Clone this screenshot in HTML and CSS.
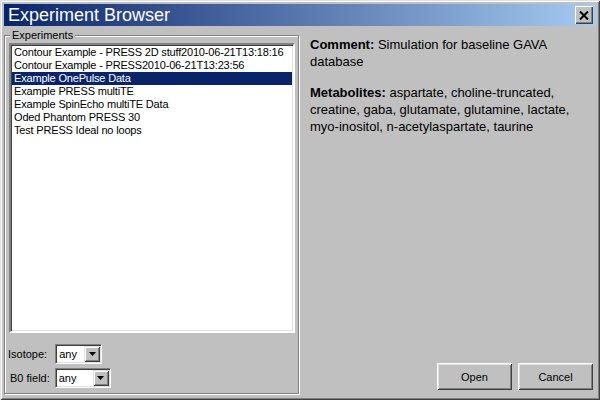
FILE: index.html
```html
<!DOCTYPE html>
<html>
<head>
<meta charset="utf-8">
<link rel="stylesheet" href="styles.css">
</head>
<body>
<div class="window">
  <div class="titlebar">
    <span class="title">Experiment Browser</span>
    <button class="close"><svg width="10" height="9" viewBox="0 0 10 9"><path d="M1 0.5 L9 8.5 M9 0.5 L1 8.5" stroke="#000" stroke-width="2" fill="none"/></svg></button>
  </div>
  <div class="content">
    <fieldset class="group">
      <legend>Experiments</legend>
      <ul class="list">
        <li>Contour Example - PRESS 2D stuff2010-06-21T13:18:16</li>
        <li>Contour Example - PRESS2010-06-21T13:23:56</li>
        <li class="selected">Example OnePulse Data</li>
        <li>Example PRESS multiTE</li>
        <li>Example SpinEcho multiTE Data</li>
        <li>Oded Phantom PRESS 30</li>
        <li>Test PRESS Ideal no loops</li>
      </ul>
      <div class="filters">
        <div class="filter filter-iso">
          <span class="label">Isotope:</span>
          <div class="combo combo-iso"><span class="value">any</span><span class="drop"><svg width="7" height="4" viewBox="0 0 7 4"><path d="M0 0 H7 L3.5 4 Z" fill="#000"/></svg></span></div>
        </div>
        <div class="filter filter-b0">
          <span class="label">B0 field:</span>
          <div class="combo combo-b0"><span class="value">any</span><span class="drop"><svg width="7" height="4" viewBox="0 0 7 4"><path d="M0 0 H7 L3.5 4 Z" fill="#000"/></svg></span></div>
        </div>
      </div>
    </fieldset>
    <div class="details">
      <div class="info">
        <p><b>Comment:</b> Simulation for baseline GAVA database</p>
        <p><b>Metabolites:</b> aspartate, choline-truncated, creatine, gaba, glutamate, glutamine, lactate, myo-inositol, n-acetylaspartate, taurine</p>
      </div>
      <div class="buttons">
        <button class="btn">Open</button>
        <button class="btn">Cancel</button>
      </div>
    </div>
  </div>
</div>
</body>
</html>
```

FILE: styles.css
```css
html, body {
  margin: 0;
  padding: 0;
}
body {
  width: 600px;
  height: 400px;
  overflow: hidden;
  font-family: "Liberation Sans", Arial, sans-serif;
}
.window {
  width: 600px;
  height: 400px;
  box-sizing: border-box;
  padding: 4px;
  background: #c0c0c0;
  box-shadow: inset 1px 1px 0 #dfdfdf, inset -1px -1px 0 #404040, inset 2px 2px 0 #fff, inset -2px -2px 0 #808080;
  display: flex;
  flex-direction: column;
}
.titlebar {
  height: 22px;
  flex: none;
  display: flex;
  align-items: center;
  background: linear-gradient(to right, #0a246a, #a6caf0);
  padding-left: 4px;
}
.title {
  flex: 1;
  color: #fff;
  font-size: 18px;
  line-height: 22px;
}
.close {
  width: 18px;
  height: 18px;
  margin: 0 3px 0 0;
  padding: 0;
  border: none;
  background: #c0c0c0;
  box-shadow: inset 1px 1px 0 #fff, inset -1px -1px 0 #404040, inset -2px -2px 0 #808080;
  display: flex;
  align-items: center;
  justify-content: center;
}
.content {
  flex: 1;
  display: flex;
  min-height: 0;
}
.group {
  width: 295px;
  box-sizing: border-box;
  margin: 3px 0 2px 0;
  padding: 1px 3px 5px 4px;
  border: 1px solid #808080;
  box-shadow: inset 1px 1px 0 #fff, 1px 1px 0 #fff;
  display: flex;
  flex-direction: column;
  min-width: 0;
}
.group legend {
  font-size: 11px;
  line-height: 13px;
  padding: 0 2px;
  margin-left: 1px;
  background: #c0c0c0;
  color: #000;
}
.list {
  flex: 1;
  margin: 0;
  padding: 1px 0 0 0;
  list-style: none;
  background: #fff;
  border-style: solid;
  border-width: 2px;
  border-color: #808080 #fff #fff #808080;
  box-shadow: inset 1px 1px 0 #404040, inset -1px -1px 0 #dfdfdf;
  font-size: 11px;
  line-height: 13px;
  letter-spacing: -0.18px;
  color: #000;
}
.list li {
  padding-left: 2px;
  margin: 0 1px;
  white-space: nowrap;
}
.list li.selected {
  background: #0a246a;
  color: #fff;
}
.filters {
  margin-top: 11px;
  display: flex;
  flex-direction: column;
  gap: 4px;
}
.filter {
  display: flex;
  align-items: center;
  font-size: 11px;
}
.filter-iso {
  margin-left: -1px;
  gap: 8px;
}
.filter-b0 {
  margin-left: 1px;
  gap: 5px;
}
.combo {
  height: 20px;
  box-sizing: border-box;
  background: #fff;
  border-style: solid;
  border-width: 1px;
  border-color: #808080 #fff #fff #808080;
  box-shadow: inset 1px 1px 0 #404040, inset -1px -1px 0 #dfdfdf;
  padding: 1px;
  display: flex;
  align-items: stretch;
}
.combo-iso {
  width: 47px;
}
.combo-b0 {
  width: 56px;
}
.combo .value {
  flex: 1;
  padding-left: 2px;
  line-height: 16px;
}
.drop {
  width: 16px;
  box-sizing: border-box;
  background: #c0c0c0;
  box-shadow: inset 1px 1px 0 #dfdfdf, inset -1px -1px 0 #404040, inset 2px 2px 0 #fff, inset -2px -2px 0 #808080;
  display: flex;
  align-items: center;
  justify-content: center;
}
.details {
  flex: 1;
  display: flex;
  flex-direction: column;
  padding: 10px 3px 6px 11px;
  min-width: 0;
}
.info {
  flex: 1;
  font-size: 13px;
  line-height: 17px;
  color: #000;
  padding-right: 8px;
}
.info p {
  margin: 0 0 14px 0;
}
.buttons {
  display: flex;
  justify-content: flex-end;
  gap: 6px;
}
.btn {
  width: 75px;
  height: 27px;
  padding: 0;
  border: none;
  background: #c0c0c0;
  box-shadow: inset 1px 1px 0 #fff, inset -1px -1px 0 #404040, inset 2px 2px 0 #dfdfdf, inset -2px -2px 0 #808080;
  font-family: "Liberation Sans", Arial, sans-serif;
  font-size: 11px;
  color: #000;
}
```
